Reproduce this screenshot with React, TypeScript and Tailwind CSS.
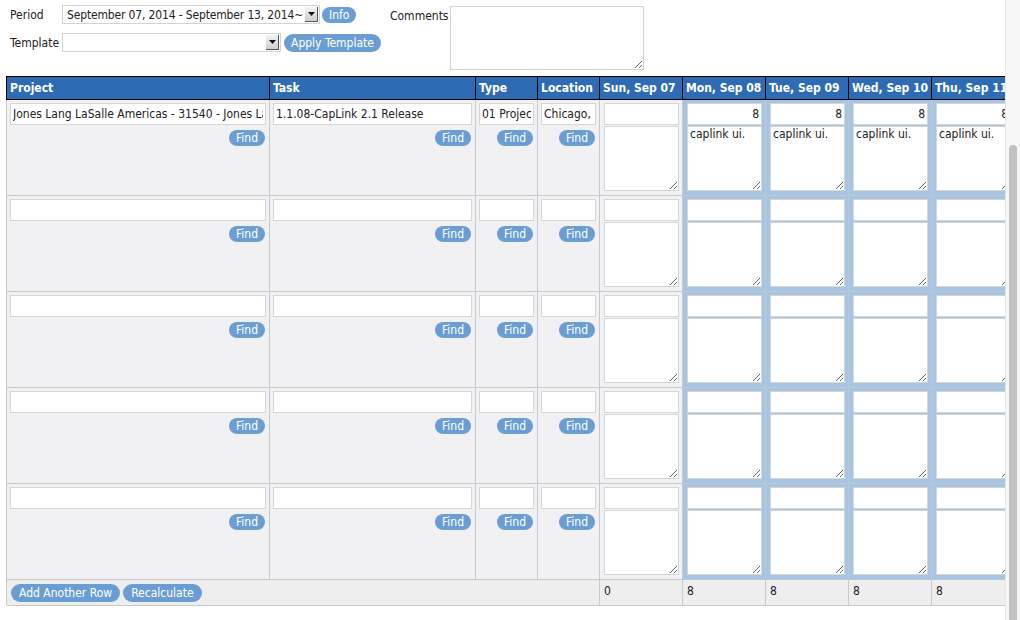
import React from 'react';

const font = { fontFamily: '"DejaVu Sans Condensed", "DejaVu Sans", sans-serif' };

const days = [
  { label: 'Sun, Sep 07', hi: false, total: '0' },
  { label: 'Mon, Sep 08', hi: true, total: '8' },
  { label: 'Tue, Sep 09', hi: true, total: '8' },
  { label: 'Wed, Sep 10', hi: true, total: '8' },
  { label: 'Thu, Sep 11', hi: true, total: '8' },
  { label: 'Fri, Sep 12', hi: true, total: '8' },
];

const rows = [
  { project: 'Jones Lang LaSalle Americas - 31540 - Jones Lang LaSalle', task: '1.1.08-CapLink 2.1 Release', type: '01 Project', location: 'Chicago, IL', filled: true },
  { project: '', task: '', type: '', location: '', filled: false },
  { project: '', task: '', type: '', location: '', filled: false },
  { project: '', task: '', type: '', location: '', filled: false },
  { project: '', task: '', type: '', location: '', filled: false },
];

function Pill({ children, className = '' }: { children: React.ReactNode; className?: string }) {
  return (
    <span
      className={`inline-flex h-[16px] items-center rounded-full bg-[#6a9ed3] px-[7px] text-[12px] leading-none text-white ${className}`}
    >
      {children}
    </span>
  );
}

function FakeSelect({ value, width }: { value: string; width: string }) {
  return (
    <div className={`flex h-[19px] items-center border border-[#d2d2d2] bg-white ${width}`}>
      <span className="flex-1 overflow-hidden whitespace-nowrap pl-[4px] text-[12px] tracking-[-0.15px] text-[#222]">{value}</span>
      <span className="mr-[1px] flex h-[15px] w-[13px] shrink-0 items-center justify-center border-r border-b border-[#555] bg-gradient-to-b from-[#f4f4f4] to-[#cfcfcf]">
        <svg width="7" height="4" viewBox="0 0 7 4">
          <path d="M0 0h7L3.5 4z" fill="#111" />
        </svg>
      </span>
    </div>
  );
}

function TextBox({ value = '', right = false }: { value?: string; right?: boolean }) {
  return (
    <input
      readOnly
      value={value}
      className={`block h-[22px] w-full border border-[#d6d6d6] bg-white px-[2px] text-[12px] text-[#222] outline-none ${right ? 'text-right' : ''}`}
      style={font}
    />
  );
}

function Note({ value = '' }: { value?: string }) {
  return (
    <textarea
      readOnly
      value={value}
      className="mt-[1px] block h-[65px] w-full resize border border-[#d6d6d6] bg-white px-[2px] text-[12px] leading-[15px] text-[#222] outline-none"
      style={font}
    />
  );
}

function InfoCell({ value }: { value: string }) {
  return (
    <td className="h-[96px] border border-[#c8c8ce] bg-[#f1f1f4] px-[3px] pt-[3px] align-top">
      <TextBox value={value} />
      <div className="mt-[5px] flex justify-end pr-[1px]">
        <Pill className="h-[15px] px-[5px]">Find</Pill>
      </div>
    </td>
  );
}

export default function App() {
  return (
    <div className="flex h-[620px] w-[1020px] overflow-hidden bg-white text-[#222]" style={font}>
      <div className="min-w-0 flex-1 overflow-hidden">
        <div className="flex gap-[9px] px-[10px] pt-[5px]">
          <div className="flex flex-col gap-[9px]">
            <div className="flex items-center">
              <span className="w-[52px] text-[12px]">Period</span>
              <FakeSelect value="September 07, 2014 - September 13, 2014~" width="w-[258px]" />
              <Pill className="ml-[2px] h-[16px] px-[6px]">Info</Pill>
            </div>
            <div className="flex items-center">
              <span className="w-[52px] text-[12px]">Template</span>
              <FakeSelect value="" width="w-[219px]" />
              <Pill className="ml-[3px] h-[18px] px-[7px]">Apply Template</Pill>
            </div>
          </div>
          <div className="flex items-start">
            <span className="w-[60px] pt-[2px] text-[12px]">Comments</span>
            <textarea readOnly className="mt-[1px] h-[64px] w-[194px] resize border border-[#d2d2d2] bg-white outline-none" />
          </div>
        </div>

        <table className="ml-[6px] mt-[6px] w-[1091px] table-fixed border-collapse text-[12px]">
          <colgroup>
            <col className="w-[263px]" />
            <col className="w-[206px]" />
            <col className="w-[62px]" />
            <col className="w-[62px]" />
            {days.map((d) => (
              <col key={d.label} className="w-[83px]" />
            ))}
          </colgroup>
          <thead>
            <tr>
              {['Project', 'Task', 'Type', 'Location', ...days.map((d) => d.label)].map((h) => (
                <th
                  key={h}
                  className="h-[23px] overflow-hidden whitespace-nowrap border border-black bg-[#2d6cb5] px-[3px] text-left text-[12px] font-bold text-white"
                >
                  {h}
                </th>
              ))}
            </tr>
          </thead>
          <tbody>
            {rows.map((r, i) => (
              <tr key={i}>
                <InfoCell value={r.project} />
                <InfoCell value={r.task} />
                <InfoCell value={r.type} />
                <InfoCell value={r.location} />
                {days.map((d) => (
                  <td
                    key={d.label}
                    className={`h-[96px] pt-[3px] pb-[4px] pl-[4px] pr-[3px] align-top ${
                      d.hi ? 'border border-[#b7c9dc] bg-[#a7c4e1]' : 'border border-[#c8c8ce] bg-[#f1f1f4]'
                    }`}
                  >
                    <TextBox value={r.filled && d.hi ? '8' : ''} right />
                    <Note value={r.filled && d.hi ? 'caplink ui.' : ''} />
                  </td>
                ))}
              </tr>
            ))}
            <tr>
              <td colSpan={4} className="h-[26px] border border-[#c8c8ce] bg-[#eeeeee] px-[4px] align-middle">
                <div className="flex gap-[3px]">
                  <Pill className="h-[18px] px-[8px]">Add Another Row</Pill>
                  <Pill className="h-[18px] px-[8px]">Recalculate</Pill>
                </div>
              </td>
              {days.map((d) => (
                <td key={d.label} className="h-[26px] border border-[#c8c8ce] bg-[#eeeeee] px-[4px] pb-[4px] align-middle text-[12px]">
                  {d.total}
                </td>
              ))}
            </tr>
          </tbody>
        </table>
      </div>
      <div className="relative w-[15px] border-l border-[#e6e6e6] bg-[#f7f7f7]">
        <div className="absolute left-[3px] top-[145px] h-[490px] w-[8px] rounded-full bg-[#c1c1c1]" />
      </div>
    </div>
  );
}
